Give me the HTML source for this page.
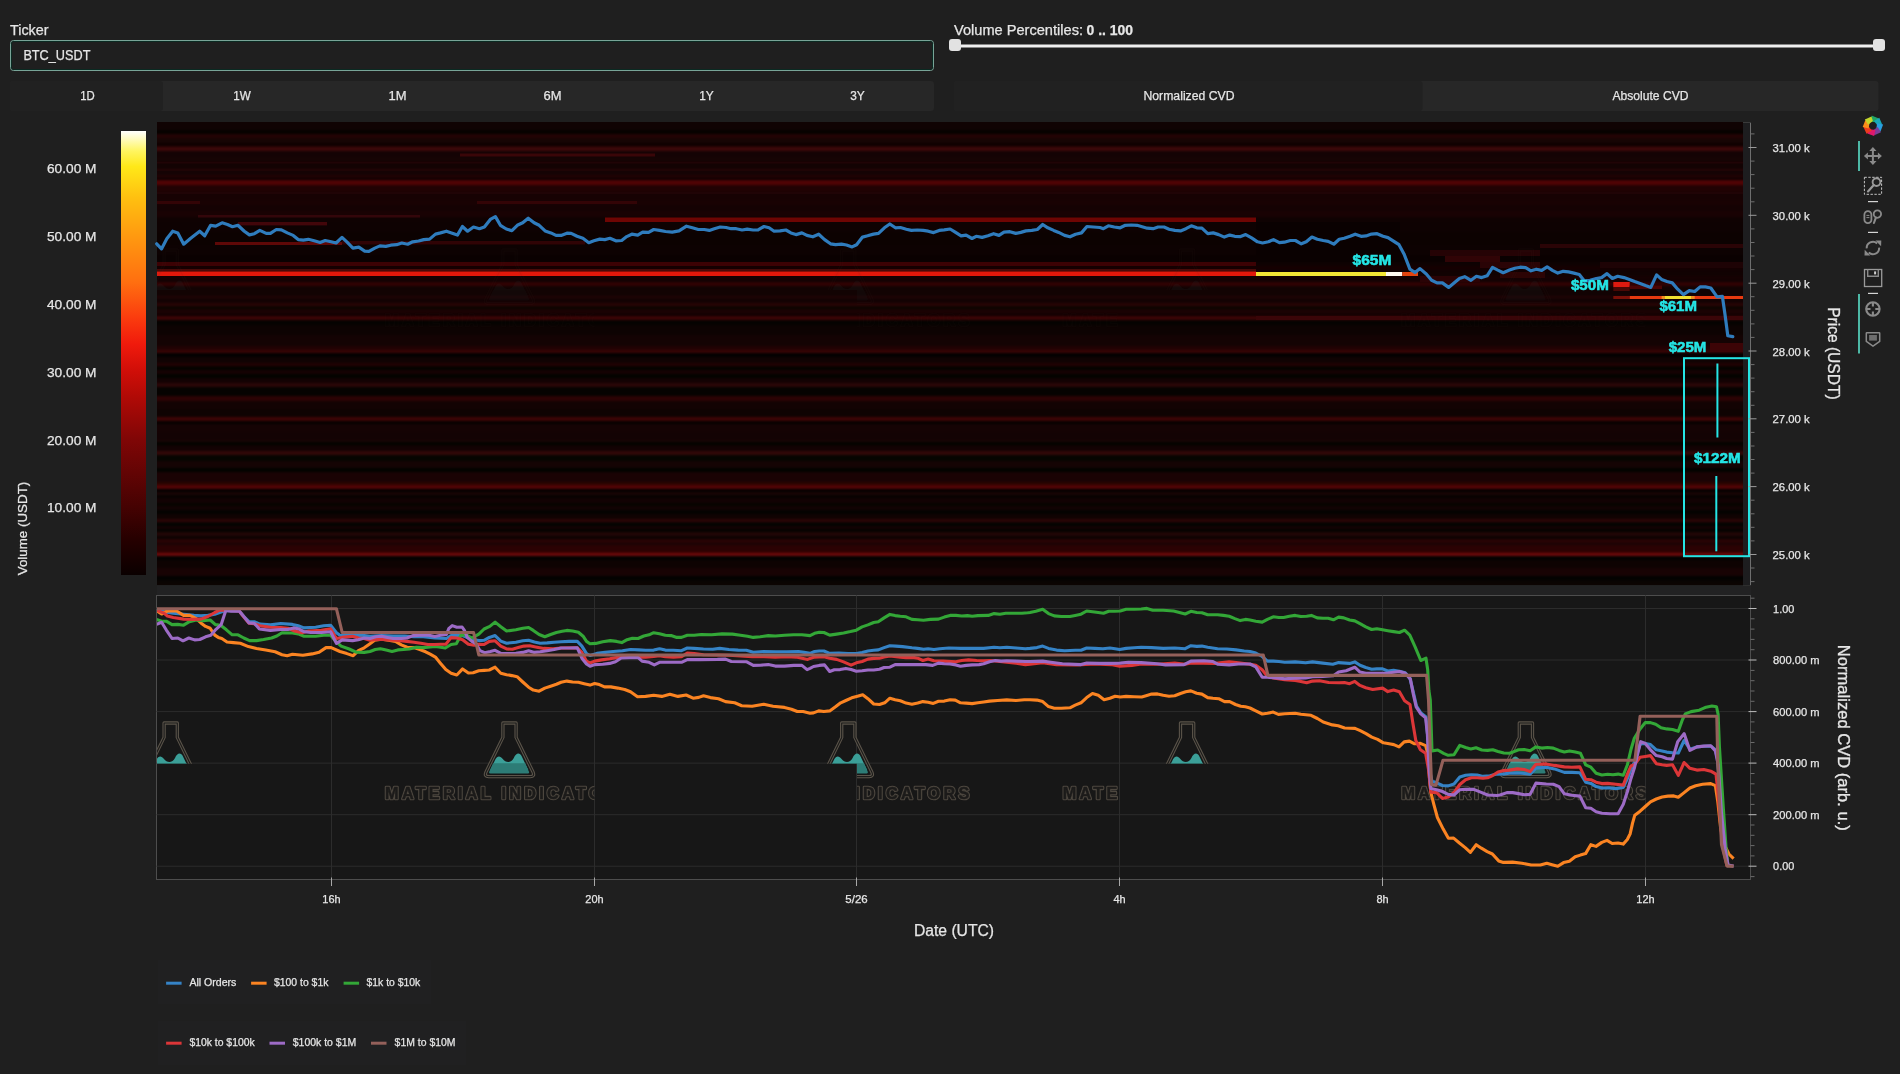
<!DOCTYPE html>
<html><head><meta charset="utf-8"><title>FireCharts</title>
<style>
html,body{margin:0;padding:0;background:#1f1f1f;width:1900px;height:1074px;overflow:hidden}
svg{display:block;font-family:"Liberation Sans",sans-serif}
text{opacity:.999}
</style></head><body>
<svg width="1900" height="1074" viewBox="0 0 1900 1074">
<rect width="1900" height="1074" fill="#1f1f1f"/>
<text x="10" y="34.6" font-size="14" text-anchor="start" font-weight="normal" fill="#e6e6e6" stroke="#e6e6e6" stroke-width="0.25" textLength="38.5" lengthAdjust="spacingAndGlyphs">Ticker</text>
<rect x="10.5" y="40.5" width="923" height="30" rx="3" fill="#1f1f1f" stroke="#78a497" stroke-width="1"/>
<rect x="11.5" y="41.5" width="921" height="28" rx="2.2" fill="none" stroke="#0b2a22" stroke-width="1"/>
<text x="23.4" y="60.2" font-size="14" text-anchor="start" font-weight="normal" fill="#e6e6e6" stroke="#e6e6e6" stroke-width="0.25" textLength="67" lengthAdjust="spacingAndGlyphs">BTC_USDT</text>
<rect x="10" y="81" width="924" height="30" rx="3" fill="#272727"/>
<rect x="10" y="81" width="153" height="30" rx="3" fill="#212121"/>
<text x="87.5" y="100" font-size="12.5" text-anchor="middle" font-weight="normal" fill="#e6e6e6" stroke="#e6e6e6" stroke-width="0.25" textLength="14.5" lengthAdjust="spacingAndGlyphs">1D</text>
<text x="242" y="100" font-size="12.5" text-anchor="middle" font-weight="normal" fill="#e6e6e6" stroke="#e6e6e6" stroke-width="0.25" textLength="17.5" lengthAdjust="spacingAndGlyphs">1W</text>
<text x="397.5" y="100" font-size="12.5" text-anchor="middle" font-weight="normal" fill="#e6e6e6" stroke="#e6e6e6" stroke-width="0.25" textLength="18" lengthAdjust="spacingAndGlyphs">1M</text>
<text x="552.5" y="100" font-size="12.5" text-anchor="middle" font-weight="normal" fill="#e6e6e6" stroke="#e6e6e6" stroke-width="0.25" textLength="18" lengthAdjust="spacingAndGlyphs">6M</text>
<text x="706.5" y="100" font-size="12.5" text-anchor="middle" font-weight="normal" fill="#e6e6e6" stroke="#e6e6e6" stroke-width="0.25" textLength="14.5" lengthAdjust="spacingAndGlyphs">1Y</text>
<text x="857.5" y="100" font-size="12.5" text-anchor="middle" font-weight="normal" fill="#e6e6e6" stroke="#e6e6e6" stroke-width="0.25" textLength="14.5" lengthAdjust="spacingAndGlyphs">3Y</text>
<text x="954" y="34.6" font-size="14" text-anchor="start" font-weight="normal" fill="#e6e6e6" stroke="#e6e6e6" stroke-width="0.25" textLength="129" lengthAdjust="spacingAndGlyphs">Volume Percentiles:</text>
<text x="1086.5" y="34.6" font-size="14" text-anchor="start" font-weight="bold" fill="#e6e6e6" stroke="#e6e6e6" stroke-width="0.25" textLength="46.5" lengthAdjust="spacingAndGlyphs">0 .. 100</text>
<rect x="955" y="44.5" width="924" height="3" fill="#efefef"/>
<rect x="949" y="39" width="12" height="12" rx="3" fill="#e2e2e2"/>
<rect x="1873" y="39" width="12" height="12" rx="3" fill="#e2e2e2"/>
<rect x="954" y="81" width="924.5" height="30" rx="3" fill="#272727"/>
<rect x="954" y="81" width="468.5" height="30" rx="3" fill="#212121"/>
<text x="1189" y="100" font-size="12.5" text-anchor="middle" font-weight="normal" fill="#e6e6e6" stroke="#e6e6e6" stroke-width="0.25" textLength="91" lengthAdjust="spacingAndGlyphs">Normalized CVD</text>
<text x="1650.5" y="100" font-size="12.5" text-anchor="middle" font-weight="normal" fill="#e6e6e6" stroke="#e6e6e6" stroke-width="0.25" textLength="76" lengthAdjust="spacingAndGlyphs">Absolute CVD</text>
<defs><linearGradient id="cb" x1="0" y1="1" x2="0" y2="0">
<stop offset="0" stop-color="#0a0000"/>
<stop offset="0.08" stop-color="#260000"/>
<stop offset="0.153" stop-color="#450202"/>
<stop offset="0.306" stop-color="#800606"/>
<stop offset="0.40" stop-color="#b00a06"/>
<stop offset="0.46" stop-color="#d00e08"/>
<stop offset="0.52" stop-color="#f01a0c"/>
<stop offset="0.58" stop-color="#fb3c0e"/>
<stop offset="0.66" stop-color="#ff6f10"/>
<stop offset="0.765" stop-color="#ff9a10"/>
<stop offset="0.85" stop-color="#ffc010"/>
<stop offset="0.92" stop-color="#ffe818"/>
<stop offset="0.955" stop-color="#fff560"/>
<stop offset="1" stop-color="#ffffff"/>
</linearGradient></defs>
<rect x="121" y="131" width="25" height="444" fill="url(#cb)"/>
<text x="96.5" y="172.9" font-size="13.3" text-anchor="end" font-weight="normal" fill="#e6e6e6" stroke="#e6e6e6" stroke-width="0.25" textLength="49.5" lengthAdjust="spacingAndGlyphs">60.00 M</text>
<text x="96.5" y="241.4" font-size="13.3" text-anchor="end" font-weight="normal" fill="#e6e6e6" stroke="#e6e6e6" stroke-width="0.25" textLength="49.5" lengthAdjust="spacingAndGlyphs">50.00 M</text>
<text x="96.5" y="309.4" font-size="13.3" text-anchor="end" font-weight="normal" fill="#e6e6e6" stroke="#e6e6e6" stroke-width="0.25" textLength="49.5" lengthAdjust="spacingAndGlyphs">40.00 M</text>
<text x="96.5" y="377.4" font-size="13.3" text-anchor="end" font-weight="normal" fill="#e6e6e6" stroke="#e6e6e6" stroke-width="0.25" textLength="49.5" lengthAdjust="spacingAndGlyphs">30.00 M</text>
<text x="96.5" y="444.9" font-size="13.3" text-anchor="end" font-weight="normal" fill="#e6e6e6" stroke="#e6e6e6" stroke-width="0.25" textLength="49.5" lengthAdjust="spacingAndGlyphs">20.00 M</text>
<text x="96.5" y="512.4" font-size="13.3" text-anchor="end" font-weight="normal" fill="#e6e6e6" stroke="#e6e6e6" stroke-width="0.25" textLength="49.5" lengthAdjust="spacingAndGlyphs">10.00 M</text>
<text transform="translate(27.2,528.5) rotate(-90)" font-size="13.3" text-anchor="middle" fill="#e6e6e6" stroke="#e6e6e6" stroke-width="0.25" textLength="93.5" lengthAdjust="spacingAndGlyphs">Volume (USDT)</text>
<rect x="157" y="122" width="1586" height="463" fill="#110303"/>
<rect x="1743" y="122" width="7.5" height="463" fill="#1d1d1f"/>
<defs><clipPath id="hclip"><rect x="157" y="122" width="1586" height="463"/></clipPath><filter id="vblur" x="0" y="0" width="100%" height="100%" filterUnits="userSpaceOnUse" primitiveUnits="userSpaceOnUse"><feGaussianBlur stdDeviation="0 0.8" color-interpolation-filters="sRGB"/></filter></defs>
<g clip-path="url(#hclip)"><g filter="url(#vblur)">
<rect x="147" y="112" width="1606" height="483" fill="#110303"/>
<rect x="147" y="122" width="1606" height="8" fill="#100303"/>
<rect x="147" y="130" width="1606" height="4" fill="#060200"/>
<rect x="147" y="134" width="1606" height="4" fill="#230304"/>
<rect x="147" y="138" width="1606" height="5" fill="#170504"/>
<rect x="147" y="143" width="1606" height="3.5" fill="#0e0000"/>
<rect x="147" y="146.5" width="1606" height="4.5" fill="#3c0809"/>
<rect x="147" y="151" width="1606" height="6" fill="#140304"/>
<rect x="147" y="157" width="1606" height="4" fill="#160404"/>
<rect x="147" y="161" width="1606" height="7" fill="#130303"/>
<rect x="147" y="168" width="1606" height="7" fill="#150304"/>
<rect x="147" y="175" width="1606" height="3" fill="#210203"/>
<rect x="147" y="178" width="1606" height="2" fill="#0b0001"/>
<rect x="147" y="180" width="1606" height="5.5" fill="#4f0304"/>
<rect x="147" y="185.5" width="1606" height="6.5" fill="#210203"/>
<rect x="147" y="192" width="1606" height="8" fill="#170203"/>
<rect x="147" y="200" width="1606" height="5" fill="#190203"/>
<rect x="147" y="205" width="1606" height="6" fill="#150203"/>
<rect x="147" y="211" width="1606" height="6.5" fill="#190203"/>
<rect x="147" y="217.5" width="1606" height="4.5" fill="#0f0202"/>
<rect x="147" y="222" width="1606" height="10" fill="#0e0202"/>
<rect x="147" y="232" width="1606" height="13" fill="#0c0201"/>
<rect x="147" y="245" width="1606" height="10" fill="#0d0202"/>
<rect x="147" y="255" width="1606" height="7" fill="#0a0101"/>
<rect x="147" y="262" width="1606" height="4" fill="#0e0202"/>
<rect x="147" y="266" width="1606" height="3" fill="#160001"/>
<rect x="147" y="269" width="1606" height="2.5" fill="#120102"/>
<rect x="147" y="271.5" width="1606" height="4.5" fill="#110202"/>
<rect x="147" y="276" width="1606" height="4" fill="#160102"/>
<rect x="147" y="280" width="1606" height="2" fill="#100203"/>
<rect x="147" y="282" width="1606" height="4" fill="#310203"/>
<rect x="147" y="286" width="1606" height="10" fill="#120303"/>
<rect x="147" y="296" width="1606" height="2" fill="#210405"/>
<rect x="147" y="298" width="1606" height="5" fill="#130203"/>
<rect x="147" y="303" width="1606" height="3.5" fill="#280405"/>
<rect x="147" y="306.5" width="1606" height="2.5" fill="#0a0500"/>
<rect x="147" y="309" width="1606" height="5" fill="#1a0203"/>
<rect x="147" y="314" width="1606" height="2" fill="#0e0001"/>
<rect x="147" y="316" width="1606" height="4" fill="#3c0405"/>
<rect x="147" y="320" width="1606" height="5" fill="#050301"/>
<rect x="147" y="325" width="1606" height="10" fill="#0d0302"/>
<rect x="147" y="335" width="1606" height="11" fill="#140303"/>
<rect x="147" y="346" width="1606" height="4" fill="#210203"/>
<rect x="147" y="350" width="1606" height="3" fill="#380405"/>
<rect x="147" y="353" width="1606" height="4" fill="#030101"/>
<rect x="147" y="357" width="1606" height="6" fill="#100303"/>
<rect x="147" y="363" width="1606" height="3.5" fill="#210203"/>
<rect x="147" y="366.5" width="1606" height="3.5" fill="#030300"/>
<rect x="147" y="370" width="1606" height="4" fill="#160203"/>
<rect x="147" y="374" width="1606" height="4" fill="#030300"/>
<rect x="147" y="378" width="1606" height="5" fill="#130203"/>
<rect x="147" y="383" width="1606" height="4" fill="#2a0607"/>
<rect x="147" y="387" width="1606" height="9" fill="#060301"/>
<rect x="147" y="396" width="1606" height="5" fill="#2c0304"/>
<rect x="147" y="401" width="1606" height="8" fill="#130303"/>
<rect x="147" y="409" width="1606" height="8" fill="#0f0302"/>
<rect x="147" y="417" width="1606" height="4" fill="#3d0405"/>
<rect x="147" y="421" width="1606" height="3" fill="#060100"/>
<rect x="147" y="424" width="1606" height="8" fill="#150304"/>
<rect x="147" y="432" width="1606" height="8" fill="#130304"/>
<rect x="147" y="440" width="1606" height="2" fill="#180404"/>
<rect x="147" y="442" width="1606" height="3.5" fill="#030300"/>
<rect x="147" y="445.5" width="1606" height="5.5" fill="#130203"/>
<rect x="147" y="451" width="1606" height="4" fill="#310808"/>
<rect x="147" y="455" width="1606" height="6" fill="#060501"/>
<rect x="147" y="461" width="1606" height="7" fill="#150404"/>
<rect x="147" y="468" width="1606" height="4" fill="#020300"/>
<rect x="147" y="472" width="1606" height="10" fill="#1a0304"/>
<rect x="147" y="482" width="1606" height="3" fill="#2b0400"/>
<rect x="147" y="485" width="1606" height="4" fill="#510405"/>
<rect x="147" y="489" width="1606" height="3" fill="#030000"/>
<rect x="147" y="492" width="1606" height="3" fill="#1a0505"/>
<rect x="147" y="495" width="1606" height="3" fill="#060201"/>
<rect x="147" y="498" width="1606" height="5" fill="#120203"/>
<rect x="147" y="503" width="1606" height="3" fill="#060400"/>
<rect x="147" y="506" width="1606" height="4" fill="#120303"/>
<rect x="147" y="510" width="1606" height="4" fill="#040301"/>
<rect x="147" y="514" width="1606" height="5" fill="#100302"/>
<rect x="147" y="519" width="1606" height="3.5" fill="#2b0506"/>
<rect x="147" y="522.5" width="1606" height="3.5" fill="#020401"/>
<rect x="147" y="526" width="1606" height="3" fill="#140203"/>
<rect x="147" y="529" width="1606" height="3" fill="#040300"/>
<rect x="147" y="532" width="1606" height="4" fill="#210606"/>
<rect x="147" y="536" width="1606" height="3" fill="#0c0302"/>
<rect x="147" y="539" width="1606" height="4" fill="#280304"/>
<rect x="147" y="543" width="1606" height="2" fill="#180404"/>
<rect x="147" y="545" width="1606" height="6.5" fill="#2b0203"/>
<rect x="147" y="551.5" width="1606" height="1.5" fill="#3c0000"/>
<rect x="147" y="553" width="1606" height="3" fill="#6c0a0b"/>
<rect x="147" y="556" width="1606" height="4" fill="#030201"/>
<rect x="147" y="560" width="1606" height="8" fill="#0e0302"/>
<rect x="147" y="568" width="1606" height="8" fill="#180304"/>
<rect x="147" y="576" width="1606" height="4" fill="#020201"/>
<rect x="147" y="580" width="1606" height="5" fill="#0a0402"/>
</g></g>
<rect x="605" y="217.5" width="651" height="4.5" fill="#6e0503"/>
<rect x="157" y="262" width="1099" height="4" fill="#3c0204"/>
<rect x="157" y="269" width="1099" height="2.5" fill="#4a0a08"/>
<rect x="157" y="271.5" width="1099" height="4.5" fill="#e2180b"/>
<rect x="1256" y="272" width="130" height="4" fill="#f5e635"/>
<rect x="1386" y="272" width="16.299999999999955" height="4" fill="#fff8f0"/>
<rect x="1402.3" y="272" width="15.700000000000045" height="4" fill="#e4440f"/>
<rect x="215" y="242" width="127" height="3" fill="#5e0807"/>
<rect x="342" y="241" width="243" height="3.5" fill="#300305"/>
<rect x="477" y="201" width="160" height="3" fill="#330406"/>
<rect x="460" y="153.5" width="195" height="3.0" fill="#3a0608"/>
<rect x="157" y="201" width="43" height="3" fill="#330406"/>
<rect x="157" y="161.6" width="1586" height="2.0" fill="#200406"/>
<rect x="157" y="168.5" width="1586" height="2.5" fill="#1f0405"/>
<rect x="157" y="192" width="1586" height="2" fill="#200406"/>
<rect x="198" y="215" width="222" height="2.5" fill="#33060a"/>
<rect x="238" y="222" width="89" height="3.4000000000000057" fill="#42060a"/>
<rect x="1613.3" y="282" width="16.40000000000009" height="5.300000000000011" fill="#dd1a10"/>
<rect x="1613.3" y="287.3" width="16.40000000000009" height="3.6999999999999886" fill="#4a0805"/>
<rect x="1629.7" y="285.5" width="32.299999999999955" height="3.5" fill="#4a0505"/>
<rect x="1613.3" y="296" width="16.40000000000009" height="3" fill="#7a1008"/>
<rect x="1629.7" y="296" width="113.29999999999995" height="3" fill="#e83a10"/>
<rect x="1665" y="296" width="26" height="3" fill="#f0e030"/>
<rect x="1661.6" y="296" width="3.400000000000091" height="3" fill="#f09020"/>
<rect x="1691" y="296" width="3.7000000000000455" height="3" fill="#f09020"/>
<rect x="1710" y="343" width="33" height="9" fill="#3c0406"/>
<rect x="1256" y="316" width="487" height="4" fill="#3a0508"/>
<rect x="1430" y="250" width="110" height="6" fill="#250305"/>
<rect x="1445" y="256" width="55" height="6" fill="#300406"/>
<rect x="1480" y="262" width="60" height="6" fill="#2a0406"/>
<rect x="1500" y="272" width="45" height="6" fill="#2c0404"/>
<rect x="1420" y="276" width="60" height="6" fill="#2a0305"/>
<rect x="1540" y="244" width="203" height="4" fill="#2a0406"/>
<rect x="1600" y="262" width="143" height="6" fill="#1e0305"/>
<rect x="1256" y="222" width="144" height="40" fill="#0a0101"/>
<polyline points="156.7,243.8 161.5,248.9 166.8,238.8 172.7,231.2 177.8,232.9 183.7,244.2 190.4,238.5 199.7,231.2 204.7,235.8 210.6,225.3 215.7,226.2 222.1,222.8 227.5,224.5 232.5,226.7 237.9,225.3 244.3,231.2 249.4,234.9 254.4,233.7 259.8,230.4 266.2,233.4 270.4,233.4 276.3,229.5 281.4,229.9 287.3,232.9 293.2,235.4 298.2,239.6 303.3,240.1 308.3,239.3 314.2,240.8 320.1,242.5 325.2,240.5 331.1,241.7 336.1,243.0 342.0,237.4 347.1,242.2 352.9,248.1 358.8,247.2 364.7,251.1 368.9,251.4 374.8,248.1 379.9,245.9 385.8,246.4 390.8,245.2 396.7,244.7 401.8,243.0 407.7,244.2 412.7,241.8 418.6,241.0 423.7,239.6 429.6,239.1 435.5,234.1 440.5,232.9 446.4,231.2 451.5,232.9 457.4,235.1 462.4,226.5 467.6,231.2 473.5,227.0 479.4,228.7 484.4,227.0 490.3,219.4 495.4,216.6 500.4,225.3 506.3,229.0 511.9,230.7 517.3,225.3 522.7,222.8 528.2,218.2 534.1,222.8 539.2,225.3 545.1,230.9 550.9,232.9 556.0,235.4 561.1,235.4 566.9,233.2 571.2,233.4 577.1,236.3 582.9,238.3 588.8,242.7 593.9,240.8 599.8,239.1 604.8,239.6 609.9,238.3 615.8,240.8 621.7,240.5 626.7,236.6 631.8,234.2 637.7,235.1 642.7,232.1 648.6,232.4 653.7,229.5 659.6,230.4 665.5,231.5 672.2,232.1 679.0,230.9 686.5,226.2 692.4,227.8 698.3,229.5 704.2,229.5 709.3,230.4 714.3,228.7 720.2,227.0 726.1,227.5 731.2,228.7 736.2,228.7 742.1,230.0 747.2,229.2 753.1,230.0 758.1,229.9 764.0,226.5 769.1,227.8 774.1,231.2 780.0,230.9 785.9,230.0 790.9,232.9 796.0,234.6 801.9,232.9 806.9,235.4 812.8,236.8 818.7,234.2 824.6,239.6 830.5,243.8 835.6,244.7 841.5,244.2 846.5,245.0 852.1,246.9 856.6,244.7 862.5,237.1 867.6,235.8 873.5,234.1 878.5,233.4 884.4,227.8 889.8,224.0 895.4,227.8 900.4,227.5 906.3,229.2 911.4,230.4 917.3,230.0 923.2,230.4 928.2,231.2 933.6,232.6 939.2,230.4 944.2,229.9 950.1,229.0 955.2,232.1 961.1,235.9 966.1,235.1 972.0,238.5 976.2,236.3 982.1,237.4 988.0,235.8 993.6,233.7 999.0,235.4 1004.0,232.1 1009.9,231.7 1015.8,233.4 1020.8,232.4 1025.9,230.9 1031.8,230.4 1037.3,229.5 1042.7,224.5 1047.8,227.8 1053.7,230.4 1058.7,232.4 1064.6,235.4 1070.0,236.8 1075.6,234.2 1081.5,232.9 1086.9,226.5 1093.3,227.0 1100.0,227.5 1103.4,228.7 1108.4,225.8 1114.3,227.0 1120.2,227.8 1125.3,225.3 1131.2,225.0 1137.1,225.3 1142.1,226.7 1147.2,228.2 1153.1,228.7 1158.1,227.0 1164.0,227.0 1169.1,229.2 1174.9,230.4 1180.5,230.9 1185.9,228.7 1191.3,225.8 1196.8,227.8 1201.9,228.2 1207.8,233.7 1213.2,232.9 1218.7,234.6 1224.3,237.1 1229.7,235.1 1234.7,236.3 1240.6,236.6 1245.7,234.6 1251.6,237.9 1257.5,241.8 1262.5,243.0 1268.4,241.8 1273.5,239.6 1279.4,242.7 1284.4,242.2 1290.3,240.5 1295.4,240.5 1301.3,243.8 1306.3,241.8 1311.9,237.1 1317.3,239.3 1323.2,240.5 1328.2,241.3 1333.8,244.2 1339.2,239.3 1344.2,238.3 1350.1,236.3 1355.2,234.2 1361.1,236.3 1366.1,235.9 1371.5,234.1 1377.1,233.7 1383.0,236.3 1388.0,237.6 1393.9,241.3 1399.0,244.7 1404.0,253.9 1409.9,269.1 1415.0,272.5 1420.0,268.6 1426.3,274.0 1431.6,280.3 1437.0,282.9 1442.4,282.9 1448.6,287.4 1454.0,282.9 1459.4,278.5 1464.7,276.7 1471.0,280.3 1476.4,276.3 1481.7,277.6 1487.1,275.8 1492.5,267.4 1497.8,270.1 1503.2,272.7 1509.5,270.1 1514.8,268.3 1520.2,267.2 1525.6,267.7 1531.0,270.8 1536.3,269.2 1541.7,270.4 1547.1,266.8 1552.4,270.4 1557.8,273.1 1563.2,271.3 1568.5,271.9 1573.9,273.1 1579.3,274.5 1584.6,281.2 1590.0,280.3 1596.3,278.5 1601.6,277.6 1607.0,273.6 1612.4,278.5 1617.7,276.3 1624.0,277.6 1629.4,279.4 1634.7,281.5 1640.1,283.5 1645.5,285.6 1650.8,287.4 1656.6,274.9 1661.6,279.4 1667.0,281.5 1672.3,282.9 1677.7,289.2 1683.4,294.6 1689.3,290.6 1694.7,291.5 1700.1,286.9 1705.4,286.9 1710.8,288.0 1717.1,296.9 1722.4,296.4 1725.1,315.2 1727.8,335.7 1732.8,336.6" fill="none" stroke="#2f7cbd" stroke-width="3.2" stroke-linejoin="round" stroke-linecap="round"/>
<rect x="1684" y="358.2" width="65" height="198" fill="none" stroke="#25e5e5" stroke-width="2"/>
<line x1="1717.4" y1="363.5" x2="1717.4" y2="437.5" stroke="#25e5e5" stroke-width="2"/>
<line x1="1716.3" y1="476" x2="1716.3" y2="551.3" stroke="#25e5e5" stroke-width="2"/>
<text x="1352.6" y="264.9" font-size="15" text-anchor="start" font-weight="bold" fill="#25e5e5" stroke="#25e5e5" stroke-width="0.6" textLength="38.8" lengthAdjust="spacingAndGlyphs">$65M</text>
<text x="1570.9" y="289.7" font-size="15" text-anchor="start" font-weight="bold" fill="#25e5e5" stroke="#25e5e5" stroke-width="0.6" textLength="38" lengthAdjust="spacingAndGlyphs">$50M</text>
<text x="1659.4" y="310.7" font-size="15" text-anchor="start" font-weight="bold" fill="#25e5e5" stroke="#25e5e5" stroke-width="0.6" textLength="37.6" lengthAdjust="spacingAndGlyphs">$61M</text>
<text x="1668.7" y="351.8" font-size="15" text-anchor="start" font-weight="bold" fill="#25e5e5" stroke="#25e5e5" stroke-width="0.6" textLength="37.6" lengthAdjust="spacingAndGlyphs">$25M</text>
<text x="1694" y="462.8" font-size="15" text-anchor="start" font-weight="bold" fill="#25e5e5" stroke="#25e5e5" stroke-width="0.6" textLength="46.6" lengthAdjust="spacingAndGlyphs">$122M</text>
<line x1="1750.5" y1="122" x2="1750.5" y2="585" stroke="#6e6e6e" stroke-width="1"/>
<line x1="1743" y1="585.5" x2="1751" y2="585.5" stroke="#3a3a3a" stroke-width="1"/>
<line x1="1743" y1="122.5" x2="1751" y2="122.5" stroke="#3a3a3a" stroke-width="1"/>
<line x1="1748.5" y1="147.5" x2="1756.5" y2="147.5" stroke="#9a9a9a" stroke-width="1"/>
<text x="1772.6" y="152.1" font-size="11" text-anchor="start" font-weight="normal" fill="#e6e6e6" stroke="#e6e6e6" stroke-width="0.25" textLength="37" lengthAdjust="spacingAndGlyphs">31.00 k</text>
<line x1="1748.5" y1="215.3" x2="1756.5" y2="215.3" stroke="#9a9a9a" stroke-width="1"/>
<text x="1772.6" y="219.92999999999998" font-size="11" text-anchor="start" font-weight="normal" fill="#e6e6e6" stroke="#e6e6e6" stroke-width="0.25" textLength="37" lengthAdjust="spacingAndGlyphs">30.00 k</text>
<line x1="1748.5" y1="283.2" x2="1756.5" y2="283.2" stroke="#9a9a9a" stroke-width="1"/>
<text x="1772.6" y="287.76" font-size="11" text-anchor="start" font-weight="normal" fill="#e6e6e6" stroke="#e6e6e6" stroke-width="0.25" textLength="37" lengthAdjust="spacingAndGlyphs">29.00 k</text>
<line x1="1748.5" y1="351.0" x2="1756.5" y2="351.0" stroke="#9a9a9a" stroke-width="1"/>
<text x="1772.6" y="355.59000000000003" font-size="11" text-anchor="start" font-weight="normal" fill="#e6e6e6" stroke="#e6e6e6" stroke-width="0.25" textLength="37" lengthAdjust="spacingAndGlyphs">28.00 k</text>
<line x1="1748.5" y1="418.8" x2="1756.5" y2="418.8" stroke="#9a9a9a" stroke-width="1"/>
<text x="1772.6" y="423.42" font-size="11" text-anchor="start" font-weight="normal" fill="#e6e6e6" stroke="#e6e6e6" stroke-width="0.25" textLength="37" lengthAdjust="spacingAndGlyphs">27.00 k</text>
<line x1="1748.5" y1="486.6" x2="1756.5" y2="486.6" stroke="#9a9a9a" stroke-width="1"/>
<text x="1772.6" y="491.25" font-size="11" text-anchor="start" font-weight="normal" fill="#e6e6e6" stroke="#e6e6e6" stroke-width="0.25" textLength="37" lengthAdjust="spacingAndGlyphs">26.00 k</text>
<line x1="1748.5" y1="554.5" x2="1756.5" y2="554.5" stroke="#9a9a9a" stroke-width="1"/>
<text x="1772.6" y="559.08" font-size="11" text-anchor="start" font-weight="normal" fill="#e6e6e6" stroke="#e6e6e6" stroke-width="0.25" textLength="37" lengthAdjust="spacingAndGlyphs">25.00 k</text>
<line x1="1750.5" y1="133.9" x2="1754.5" y2="133.9" stroke="#6e6e6e" stroke-width="1"/>
<line x1="1750.5" y1="161.1" x2="1754.5" y2="161.1" stroke="#6e6e6e" stroke-width="1"/>
<line x1="1750.5" y1="174.6" x2="1754.5" y2="174.6" stroke="#6e6e6e" stroke-width="1"/>
<line x1="1750.5" y1="188.2" x2="1754.5" y2="188.2" stroke="#6e6e6e" stroke-width="1"/>
<line x1="1750.5" y1="201.8" x2="1754.5" y2="201.8" stroke="#6e6e6e" stroke-width="1"/>
<line x1="1750.5" y1="228.9" x2="1754.5" y2="228.9" stroke="#6e6e6e" stroke-width="1"/>
<line x1="1750.5" y1="242.5" x2="1754.5" y2="242.5" stroke="#6e6e6e" stroke-width="1"/>
<line x1="1750.5" y1="256.0" x2="1754.5" y2="256.0" stroke="#6e6e6e" stroke-width="1"/>
<line x1="1750.5" y1="269.6" x2="1754.5" y2="269.6" stroke="#6e6e6e" stroke-width="1"/>
<line x1="1750.5" y1="296.7" x2="1754.5" y2="296.7" stroke="#6e6e6e" stroke-width="1"/>
<line x1="1750.5" y1="310.3" x2="1754.5" y2="310.3" stroke="#6e6e6e" stroke-width="1"/>
<line x1="1750.5" y1="323.9" x2="1754.5" y2="323.9" stroke="#6e6e6e" stroke-width="1"/>
<line x1="1750.5" y1="337.4" x2="1754.5" y2="337.4" stroke="#6e6e6e" stroke-width="1"/>
<line x1="1750.5" y1="364.6" x2="1754.5" y2="364.6" stroke="#6e6e6e" stroke-width="1"/>
<line x1="1750.5" y1="378.1" x2="1754.5" y2="378.1" stroke="#6e6e6e" stroke-width="1"/>
<line x1="1750.5" y1="391.7" x2="1754.5" y2="391.7" stroke="#6e6e6e" stroke-width="1"/>
<line x1="1750.5" y1="405.3" x2="1754.5" y2="405.3" stroke="#6e6e6e" stroke-width="1"/>
<line x1="1750.5" y1="432.4" x2="1754.5" y2="432.4" stroke="#6e6e6e" stroke-width="1"/>
<line x1="1750.5" y1="446.0" x2="1754.5" y2="446.0" stroke="#6e6e6e" stroke-width="1"/>
<line x1="1750.5" y1="459.5" x2="1754.5" y2="459.5" stroke="#6e6e6e" stroke-width="1"/>
<line x1="1750.5" y1="473.1" x2="1754.5" y2="473.1" stroke="#6e6e6e" stroke-width="1"/>
<line x1="1750.5" y1="500.2" x2="1754.5" y2="500.2" stroke="#6e6e6e" stroke-width="1"/>
<line x1="1750.5" y1="513.8" x2="1754.5" y2="513.8" stroke="#6e6e6e" stroke-width="1"/>
<line x1="1750.5" y1="527.3" x2="1754.5" y2="527.3" stroke="#6e6e6e" stroke-width="1"/>
<line x1="1750.5" y1="540.9" x2="1754.5" y2="540.9" stroke="#6e6e6e" stroke-width="1"/>
<line x1="1750.5" y1="568.0" x2="1754.5" y2="568.0" stroke="#6e6e6e" stroke-width="1"/>
<line x1="1750.5" y1="581.6" x2="1754.5" y2="581.6" stroke="#6e6e6e" stroke-width="1"/>
<text transform="translate(1827.7,353.4) rotate(90)" font-size="16" text-anchor="middle" fill="#e6e6e6" stroke="#e6e6e6" stroke-width="0.3" textLength="92.5" lengthAdjust="spacingAndGlyphs">Price (USDT)</text>
<rect x="157" y="585.5" width="1594" height="10" fill="#222223"/>
<rect x="156.5" y="595.5" width="1594.0" height="284.0" fill="#171717" stroke="#4d4d4d" stroke-width="1"/>
<line x1="156.5" y1="608.5" x2="1750.5" y2="608.5" stroke="#2c2c2c" stroke-width="1"/>
<line x1="156.5" y1="660.0" x2="1750.5" y2="660.0" stroke="#2c2c2c" stroke-width="1"/>
<line x1="156.5" y1="711.6" x2="1750.5" y2="711.6" stroke="#2c2c2c" stroke-width="1"/>
<line x1="156.5" y1="763.1" x2="1750.5" y2="763.1" stroke="#2c2c2c" stroke-width="1"/>
<line x1="156.5" y1="814.7" x2="1750.5" y2="814.7" stroke="#2c2c2c" stroke-width="1"/>
<line x1="156.5" y1="866.2" x2="1750.5" y2="866.2" stroke="#2c2c2c" stroke-width="1"/>
<line x1="331.5" y1="595.5" x2="331.5" y2="879.5" stroke="#2c2c2c" stroke-width="1"/>
<line x1="594.5" y1="595.5" x2="594.5" y2="879.5" stroke="#2c2c2c" stroke-width="1"/>
<line x1="856.5" y1="595.5" x2="856.5" y2="879.5" stroke="#2c2c2c" stroke-width="1"/>
<line x1="1119.5" y1="595.5" x2="1119.5" y2="879.5" stroke="#2c2c2c" stroke-width="1"/>
<line x1="1382.5" y1="595.5" x2="1382.5" y2="879.5" stroke="#2c2c2c" stroke-width="1"/>
<line x1="1645.5" y1="595.5" x2="1645.5" y2="879.5" stroke="#2c2c2c" stroke-width="1"/>
<defs>
<clipPath id="wm"><rect x="157" y="596" width="1593" height="167.7"/><rect x="331.5" y="763" width="263" height="116"/><rect x="857" y="763" width="263" height="116"/><rect x="1382.5" y="763" width="263" height="116"/></clipPath>
<clipPath id="wmh"><rect x="157" y="122" width="1586" height="168"/><rect x="331.5" y="289" width="263" height="296"/><rect x="857" y="289" width="263" height="296"/><rect x="1382.5" y="289" width="263" height="296"/></clipPath>
<filter id="soft" x="-5%" y="-5%" width="110%" height="110%" color-interpolation-filters="sRGB"><feGaussianBlur stdDeviation="0.45"/></filter>
<g id="flask">
<path d="M119.1,13 H132.3 V27.4 L149.2,62 Q151.3,66.6 146.5,66.6 H104.9 Q100.1,66.6 102.2,62 L119.1,27.4 Z" fill="none" stroke="#5b544a" stroke-width="3.3" stroke-linejoin="round"/>
<path d="M119.1,13 H132.3 V27.4 L149.2,62 Q151.3,66.6 146.5,66.6 H104.9 Q100.1,66.6 102.2,62 L119.1,27.4 Z" fill="none" stroke="#1a1a19" stroke-width="1.1" stroke-linejoin="round"/>
<path d="M106.5,60 L111.5,49.5 C113.5,45.5 116.5,45.5 119,49 C122,53 127.5,53 130,48 C132,43.5 135.5,41.5 138,46.5 L144.5,60 z" fill="#3b9f98"/>
<path d="M109.3,53.2 h32 l3.9,8.6 q0.6,1.6 -1.2,1.6 h-37.4 q-1.8,0 -1.2,-1.6 z" fill="#2d7c76"/>
</g>
<g id="wmt"><g filter="url(#soft)"><use href="#flask"/>
<text x="1.3" y="89.1" font-size="16.2" font-weight="bold" fill="#4d473f" stroke="#4d473f" stroke-width="2.7" stroke-linejoin="round" textLength="245.4" lengthAdjust="spacing">MATERIAL INDICATORS</text>
<text x="1.3" y="89.1" font-size="16.2" font-weight="bold" fill="#1c1b1a" stroke="#1c1b1a" stroke-width="0.5" stroke-linejoin="round" textLength="245.4" lengthAdjust="spacing">MATERIAL INDICATORS</text>
</g></g>
</defs>
<g clip-path="url(#wm)">
<use href="#wmt" x="45.0" y="710"/>
<use href="#wmt" x="383.8" y="710"/>
<use href="#wmt" x="722.6" y="710"/>
<use href="#wmt" x="1061.4" y="710"/>
<use href="#wmt" x="1400.2" y="710"/>
</g>
<g clip-path="url(#wmh)" opacity="0.05">
<use href="#wmt" x="45.0" y="237"/>
<use href="#wmt" x="383.8" y="237"/>
<use href="#wmt" x="722.6" y="237"/>
<use href="#wmt" x="1061.4" y="237"/>
<use href="#wmt" x="1400.2" y="237"/>
</g>
<defs><clipPath id="bc"><rect x="157" y="596" width="1593" height="283"/></clipPath></defs><g clip-path="url(#bc)" fill="none" stroke-width="3.1" stroke-linejoin="round" stroke-linecap="butt">
<polyline points="156.6,609.6 165.1,611.9 173.2,613.1 183.6,614.2 194.0,615.4 200.9,615.9 207.9,615.4 214.8,614.2 221.8,611.9 225.8,610.5 239.2,611.0 243.8,616.5 249.0,621.7 254.2,621.7 260.0,624.1 270.4,624.9 280.8,623.5 292.4,624.4 298.2,625.8 304.0,627.9 315.6,627.2 323.7,625.8 330.6,625.2 336.4,632.7 339.9,635.3 352.6,635.6 364.2,635.6 370.0,636.2 381.6,635.6 393.2,636.0 404.7,636.0 414.0,636.8 420.9,636.4 427.9,637.1 434.8,638.0 440.6,638.3 446.4,638.5 451.1,635.6 456.8,635.1 462.6,635.6 468.4,638.0 474.2,639.7 478.8,640.6 484.1,640.3 489.3,637.4 495.1,635.6 500.8,641.1 506.6,643.2 515.9,642.2 522.8,640.8 528.6,640.3 534.4,642.0 540.2,643.2 547.2,642.9 554.1,642.2 561.1,641.8 569.2,641.4 577.3,641.4 581.9,646.1 586.5,653.6 590.0,655.5 596.9,653.4 605.1,652.4 613.2,651.5 622.4,650.7 630.5,649.5 638.6,649.9 645.6,650.3 653.7,650.1 659.5,648.7 665.3,650.1 673.4,650.3 681.5,650.7 687.3,648.0 694.2,648.4 703.5,649.0 712.7,649.2 719.7,648.4 728.9,649.5 738.2,650.1 746.3,650.3 753.3,652.2 763.7,651.5 775.3,651.8 786.8,651.8 798.4,651.5 804.2,652.4 810.0,653.4 814.6,651.5 819.3,651.0 823.9,651.0 829.7,653.4 838.9,653.0 848.2,653.6 856.3,653.6 862.1,652.4 867.9,651.0 873.7,650.3 878.3,649.9 884.1,647.6 889.9,645.7 895.7,646.1 902.6,646.6 911.9,647.8 917.7,648.4 923.5,649.2 928.1,648.7 933.9,649.5 939.7,648.7 948.9,648.0 960.5,648.4 972.1,648.4 983.7,648.4 994.1,647.2 999.9,647.8 1006.8,647.2 1016.1,648.0 1025.4,648.7 1030.0,648.4 1036.9,647.6 1042.7,646.1 1048.5,648.4 1056.6,650.1 1064.7,650.7 1075.2,650.3 1081.0,650.3 1086.7,648.0 1094.8,648.4 1102.9,648.7 1109.9,648.0 1115.1,648.7 1119.7,649.5 1126.1,648.4 1134.2,647.8 1141.2,647.2 1151.6,647.6 1163.2,648.4 1174.7,648.0 1185.2,648.7 1190.9,645.7 1196.7,646.4 1201.9,646.1 1207.7,647.2 1217.6,648.7 1226.8,649.0 1236.1,649.9 1244.2,651.0 1250.0,651.5 1255.8,653.0 1262.2,656.5 1267.4,661.1 1273.2,661.1 1278.9,661.5 1284.7,662.3 1295.2,661.9 1305.6,662.8 1312.5,661.9 1322.9,663.1 1332.8,664.2 1338.6,662.6 1349.6,663.4 1354.8,661.9 1360.0,665.2 1365.8,667.5 1371.6,669.2 1376.8,668.9 1382.6,668.9 1387.8,671.0 1393.6,670.4 1399.4,671.2 1405.2,672.7 1409.8,677.9 1413.3,692.0 1416.5,706.0 1421.0,713.0 1426.0,717.0 1427.6,735.0 1429.5,770.0 1432.0,781.1 1436.6,782.8 1442.4,785.5 1448.2,785.9 1454.0,784.0 1459.8,777.0 1465.6,775.3 1471.4,774.7 1477.2,775.0 1483.0,776.4 1489.9,775.8 1496.9,774.1 1503.8,773.9 1509.3,773.2 1517.4,773.0 1524.3,773.5 1530.1,774.3 1535.9,768.1 1546.3,767.2 1554.4,768.9 1564.3,772.4 1571.8,772.4 1579.9,772.7 1585.7,782.2 1590.9,783.4 1596.1,786.6 1601.9,788.0 1607.7,787.8 1615.8,788.6 1623.3,787.4 1627.4,778.7 1630.9,769.5 1634.3,762.5 1640.1,744.0 1645.3,743.4 1650.5,744.6 1656.3,749.8 1662.1,750.9 1666.7,752.1 1672.5,752.7 1678.3,753.0 1684.1,740.5 1689.9,749.2 1696.9,746.9 1703.8,746.3 1710.8,746.1 1715.4,749.8 1717.7,760.2 1721.5,813.0 1725.2,848.4 1727.5,866.1" stroke="#3583c6"/>
<polyline points="156.6,610.5 161.6,614.0 167.4,611.0 176.6,611.0 183.6,615.4 189.9,615.4 196.3,618.6 200.9,622.9 205.6,626.4 210.2,628.3 214.8,635.1 218.3,637.4 221.8,638.5 227.0,642.0 233.4,642.6 240.3,643.2 248.4,646.6 256.5,648.4 265.8,650.1 275.1,651.8 282.0,654.7 287.2,655.7 292.4,654.2 302.9,655.3 312.1,653.9 319.1,652.2 326.0,647.6 331.2,647.6 339.9,651.5 346.9,653.6 353.2,655.7 358.4,650.7 364.2,647.8 370.0,643.7 374.6,640.3 381.6,639.1 388.5,640.3 395.5,641.4 401.3,644.9 407.1,647.2 414.0,647.6 419.8,649.5 425.6,651.8 430.2,654.2 435.4,657.1 440.6,663.4 445.8,669.6 451.1,673.3 456.8,675.0 462.6,668.9 468.4,673.0 473.1,672.7 478.8,670.7 484.1,670.4 489.3,670.0 495.1,667.2 500.8,673.3 506.6,674.7 511.8,675.6 517.1,676.7 522.8,682.0 528.6,687.2 533.3,690.1 539.1,691.2 544.8,688.1 550.6,686.2 556.4,684.3 561.1,682.3 566.9,681.1 572.6,682.0 578.4,682.3 584.2,683.7 590.0,685.1 594.6,683.5 599.3,684.6 604.5,686.9 610.8,686.9 617.8,688.1 624.7,689.5 630.5,691.8 637.5,696.7 645.6,696.4 653.7,695.3 661.8,696.4 669.9,694.3 678.0,696.4 686.1,695.0 693.1,698.2 698.8,697.4 703.5,695.8 710.4,697.6 718.5,698.7 725.5,701.6 734.7,702.8 741.7,705.7 752.1,706.3 763.7,704.3 773.0,706.3 784.5,707.4 791.5,709.2 797.3,711.5 803.1,711.5 810.0,713.2 813.5,712.9 818.7,710.9 823.9,711.5 829.7,710.9 835.5,706.8 840.7,702.8 845.9,700.5 851.7,697.8 857.5,696.2 862.7,694.7 867.9,698.7 873.7,704.0 879.5,704.5 884.7,702.8 889.9,698.2 895.1,699.7 900.3,700.8 906.1,703.1 911.9,704.3 917.7,703.1 922.9,701.6 928.1,702.2 933.3,703.4 938.5,701.3 944.3,701.1 950.1,699.7 955.3,700.1 960.5,702.8 966.3,703.1 972.1,703.6 977.9,702.8 983.7,702.0 989.5,701.1 997.6,700.5 1006.8,699.9 1016.1,700.5 1024.2,699.7 1030.0,699.7 1036.9,700.1 1042.7,701.6 1048.5,706.6 1054.3,708.2 1061.3,708.2 1069.9,707.8 1075.2,705.1 1081.0,702.8 1086.7,697.6 1092.5,693.5 1098.3,695.3 1104.1,699.7 1109.9,698.2 1115.1,696.2 1120.3,697.0 1126.1,696.4 1134.2,696.7 1141.7,697.0 1146.9,695.5 1151.6,694.1 1157.4,693.9 1163.2,695.3 1169.0,696.2 1174.7,695.8 1180.5,693.5 1185.7,691.8 1190.9,690.9 1196.7,693.2 1201.9,694.1 1207.7,697.6 1212.9,698.2 1218.7,698.7 1224.5,701.6 1229.7,701.6 1235.5,704.5 1240.7,706.3 1245.4,706.8 1250.0,708.0 1255.8,710.9 1262.2,714.0 1267.4,713.2 1273.2,712.1 1278.4,714.4 1284.7,713.8 1295.2,713.2 1300.9,714.2 1311.0,715.3 1317.4,718.5 1323.2,722.0 1332.4,724.9 1338.2,725.7 1344.6,728.0 1355.0,728.4 1360.2,730.7 1366.0,733.6 1371.8,737.1 1377.6,739.4 1383.4,742.8 1389.2,743.8 1393.8,744.6 1399.0,746.9 1404.2,741.9 1409.4,741.1 1414.6,743.8 1420.4,743.4 1425.6,745.7 1428.0,754.4 1429.7,781.1 1431.0,793.2 1433.9,804.7 1437.4,817.5 1443.2,829.1 1448.4,838.3 1453.6,838.1 1459.4,843.0 1465.2,847.6 1470.4,852.4 1476.2,844.7 1481.4,848.2 1487.2,851.6 1492.4,854.0 1498.7,860.9 1503.4,862.4 1512.6,862.1 1521.9,863.2 1531.2,865.0 1540.4,865.0 1546.8,863.2 1552.0,864.7 1557.8,866.3 1563.6,862.6 1569.4,861.2 1575.2,856.8 1580.4,855.1 1585.6,853.6 1590.8,844.7 1596.0,846.4 1601.8,842.4 1607.0,840.4 1612.2,843.5 1618.0,843.0 1623.2,844.1 1627.3,839.5 1630.2,833.7 1632.5,823.3 1634.8,815.2 1640.1,811.2 1645.3,806.5 1650.5,801.9 1656.3,799.0 1662.1,797.0 1667.9,796.1 1673.7,795.9 1678.3,797.3 1684.1,792.6 1689.9,788.0 1695.7,785.7 1702.6,784.3 1710.7,783.6 1715.4,785.7 1717.8,801.8 1720.6,827.9 1724.3,844.6 1728.9,854.0 1733.6,858.6" stroke="#fb8422"/>
<polyline points="156.6,619.4 161.6,621.2 166.2,621.2 172.0,624.6 177.8,624.4 183.6,625.2 189.4,621.7 196.3,620.0 203.3,620.6 210.2,620.0 215.4,624.6 220.6,625.2 226.4,629.8 232.2,634.8 238.0,634.8 243.8,638.0 249.6,640.6 256.5,640.6 263.5,639.5 271.6,638.0 276.8,636.0 282.0,632.7 292.4,633.0 298.2,633.9 304.0,636.2 315.6,636.2 323.7,635.3 330.6,635.3 335.3,640.8 341.1,646.1 349.2,649.0 356.1,652.2 364.2,652.4 370.0,651.5 375.2,649.5 380.4,648.7 386.2,650.1 392.0,651.5 397.8,649.9 403.6,649.5 409.4,649.0 416.3,647.2 423.3,647.6 430.2,646.9 435.4,646.4 440.6,647.2 445.3,648.0 451.1,644.5 456.3,643.7 460.9,635.3 466.1,634.8 471.9,638.0 478.8,634.1 484.1,629.0 489.8,626.4 495.1,622.1 500.8,626.7 506.6,631.0 515.9,629.8 522.8,628.3 528.6,627.5 533.3,630.4 539.1,634.5 544.8,636.8 550.6,634.5 556.4,632.5 562.2,631.3 566.9,630.4 572.6,631.0 578.4,632.2 583.1,636.2 586.5,641.4 590.0,643.7 595.8,643.4 602.7,641.8 610.3,640.6 616.6,641.4 621.8,642.6 627.1,639.7 632.3,638.3 638.1,638.5 643.8,636.0 649.1,634.8 653.7,632.7 659.5,633.7 665.3,635.3 671.1,635.6 676.8,637.4 681.5,637.4 687.3,635.3 694.2,635.3 701.2,634.5 711.6,634.8 722.0,633.9 732.4,634.1 740.5,635.3 747.5,636.2 753.3,637.4 760.2,636.8 768.3,635.6 775.3,636.0 784.5,635.3 793.8,634.8 801.9,634.8 810.0,635.6 814.6,633.3 819.3,632.2 823.9,632.5 829.7,635.1 836.6,634.1 843.6,633.0 850.5,631.6 856.3,630.2 862.1,626.9 867.9,624.9 873.7,622.5 878.3,621.7 884.1,617.9 889.9,614.4 895.1,615.6 900.3,616.3 906.1,616.8 911.9,619.4 917.7,619.8 923.5,620.2 930.4,619.4 938.5,619.1 944.3,617.1 950.1,615.4 955.9,615.4 961.7,616.0 967.5,615.6 972.1,616.3 977.9,615.6 988.3,615.4 994.1,613.6 999.9,614.2 1005.7,613.3 1013.8,613.3 1021.9,613.3 1027.7,612.8 1030.0,612.5 1035.8,611.3 1042.7,609.3 1048.5,613.6 1054.3,615.9 1061.3,616.5 1069.9,616.5 1075.2,615.4 1081.0,614.2 1086.7,611.0 1092.5,611.7 1098.3,612.5 1103.5,613.3 1108.7,611.3 1114.5,611.3 1120.3,611.0 1126.1,609.3 1134.2,609.3 1141.2,609.0 1146.9,608.4 1152.7,610.2 1163.2,610.2 1173.6,611.0 1179.4,612.5 1185.2,614.0 1190.9,611.3 1196.7,612.5 1201.9,612.8 1207.7,614.8 1217.6,614.8 1223.4,615.4 1229.2,616.3 1234.9,618.6 1240.2,620.6 1245.4,619.4 1250.0,620.0 1255.8,621.2 1262.2,622.1 1267.4,619.4 1273.2,616.8 1278.9,617.5 1283.6,617.5 1289.4,616.3 1295.2,615.4 1300.9,616.5 1306.7,616.3 1311.4,615.4 1317.2,617.9 1322.9,618.3 1328.2,618.3 1333.4,619.8 1338.6,617.1 1343.8,617.9 1349.6,620.0 1354.8,620.9 1360.0,623.7 1365.8,626.9 1371.6,629.5 1376.8,628.7 1382.6,629.8 1387.8,630.7 1393.6,631.6 1399.4,632.5 1404.6,630.2 1409.8,635.1 1415.0,646.6 1420.8,660.5 1426.0,658.2 1427.7,669.8 1428.9,690.6 1430.3,700.0 1432.0,750.9 1437.8,750.0 1443.6,753.3 1448.2,755.3 1454.0,754.7 1459.8,745.4 1465.6,747.5 1470.8,748.9 1476.0,747.7 1481.8,750.0 1487.6,750.4 1492.8,749.8 1498.0,751.5 1503.8,753.0 1509.6,753.3 1512.7,752.1 1518.5,749.8 1524.3,749.6 1530.1,750.7 1535.9,746.9 1541.7,748.1 1547.5,747.5 1553.3,748.1 1559.1,750.4 1564.3,751.9 1569.5,750.9 1575.3,752.1 1580.5,753.3 1585.7,764.8 1590.9,767.2 1596.1,773.2 1601.9,775.0 1607.7,774.3 1612.9,774.7 1618.1,774.1 1623.3,775.3 1627.4,764.8 1630.9,749.8 1634.3,738.2 1640.1,728.9 1645.3,722.6 1650.5,722.6 1655.7,724.3 1661.0,727.8 1666.7,728.9 1672.5,729.5 1678.3,731.3 1682.4,719.7 1685.3,713.9 1691.1,711.6 1699.2,710.2 1706.1,707.2 1711.9,706.0 1716.5,706.7 1718.1,714.2 1719.4,746.3 1723.4,809.2 1726.1,848.4 1728.0,866.1" stroke="#33a737"/>
<polyline points="156.6,610.2 163.9,613.1 167.4,616.0 173.2,617.5 183.6,619.1 194.0,619.4 200.9,619.1 207.9,616.5 214.8,612.5 219.5,610.2 225.8,610.2 239.2,611.0 243.8,617.1 249.0,623.2 254.2,623.7 260.0,625.8 270.4,627.2 280.8,627.5 287.8,628.3 294.7,631.0 301.7,632.7 308.6,631.0 321.4,630.2 330.6,628.7 336.4,638.5 342.2,637.4 352.6,636.2 358.4,638.0 364.2,638.5 370.0,640.3 375.8,639.5 381.6,639.1 388.5,639.9 395.5,640.3 404.7,641.1 414.0,642.2 420.9,643.2 427.9,644.5 434.8,644.5 440.6,644.3 445.8,644.3 451.1,637.6 456.8,638.0 462.6,639.7 468.4,644.3 474.2,645.2 478.8,644.3 484.1,644.5 489.3,641.4 495.1,640.8 500.8,646.1 506.6,648.9 512.4,649.2 518.2,647.6 524.0,646.1 529.8,645.7 535.6,646.9 543.7,648.4 552.9,648.7 561.1,648.0 577.3,647.8 581.9,652.4 586.5,661.1 590.0,663.0 594.6,661.1 601.6,659.9 609.7,658.8 616.6,657.6 624.7,657.1 638.6,657.1 645.6,657.3 653.7,656.5 659.5,655.7 665.3,656.8 673.4,657.3 681.5,656.8 687.3,653.0 694.2,653.6 703.5,654.7 717.4,655.0 728.9,655.3 740.5,655.9 752.1,656.8 763.7,656.8 775.3,657.1 786.8,656.8 796.1,657.1 803.1,658.4 807.7,659.4 810.0,658.4 814.6,657.1 823.9,656.8 829.7,658.2 836.6,659.4 843.6,661.9 851.1,665.2 856.3,662.8 862.1,661.5 867.9,659.1 873.7,658.4 879.5,658.2 884.1,657.1 889.9,655.9 900.3,657.3 906.1,657.6 914.2,657.6 917.7,658.2 922.9,660.5 928.1,659.1 933.9,660.8 943.2,661.1 955.9,661.7 961.7,660.5 968.6,659.9 976.7,660.5 983.7,660.8 990.6,660.5 999.9,661.5 1006.8,662.3 1016.1,663.1 1025.4,664.6 1030.0,664.2 1042.7,662.6 1056.6,664.6 1076.3,664.9 1094.8,664.0 1111.1,664.6 1119.7,666.3 1131.9,665.4 1141.2,664.0 1157.4,664.2 1174.7,663.1 1185.2,664.2 1190.9,663.1 1203.7,663.1 1215.3,663.4 1229.2,661.9 1238.4,662.8 1250.0,664.2 1255.8,665.2 1262.2,669.8 1267.4,676.2 1273.2,677.9 1284.7,679.6 1295.2,680.4 1300.9,681.4 1306.7,682.8 1312.5,681.1 1319.5,680.8 1328.7,682.5 1339.2,682.8 1344.4,682.5 1349.6,683.7 1354.8,681.4 1360.0,685.4 1365.8,687.7 1372.7,689.5 1382.6,688.1 1387.8,691.6 1393.6,690.1 1399.4,691.8 1404.6,700.8 1410.0,704.6 1412.9,723.2 1415.8,740.5 1420.4,749.8 1425.6,753.3 1428.5,769.5 1430.8,792.1 1436.6,792.6 1442.4,798.4 1448.2,797.0 1454.0,792.6 1459.8,784.5 1465.6,779.7 1471.4,777.8 1477.2,777.8 1483.0,778.2 1487.6,777.8 1492.2,775.8 1498.0,772.0 1503.8,770.6 1509.3,770.1 1517.4,768.9 1524.3,769.5 1530.1,771.6 1535.9,764.3 1546.3,763.9 1554.4,765.4 1564.3,766.9 1571.8,767.2 1579.9,766.9 1585.7,779.3 1590.9,779.7 1596.1,782.2 1601.9,783.6 1607.7,783.4 1615.8,784.3 1623.3,785.1 1627.4,774.1 1630.9,766.0 1634.3,764.8 1640.1,757.3 1645.3,756.5 1650.5,755.6 1656.3,763.7 1662.1,764.8 1666.7,765.4 1672.5,764.8 1678.3,775.3 1684.1,762.5 1689.9,768.3 1696.9,770.1 1703.8,769.5 1710.8,771.2 1716.0,774.1 1718.1,794.3 1720.6,824.2 1722.4,844.6 1727.0,866.1" stroke="#dc3638"/>
<polyline points="156.6,624.4 161.6,622.3 166.2,629.8 172.0,638.5 177.8,638.0 183.0,640.8 188.8,638.0 194.6,639.9 199.8,639.5 205.6,636.8 210.8,635.3 216.0,629.3 221.2,624.6 225.8,610.5 231.1,611.3 239.2,611.0 243.8,616.5 249.0,622.9 254.2,623.2 259.4,629.0 270.4,630.4 280.8,629.5 287.8,629.5 293.6,627.9 298.2,628.7 304.0,631.6 311.0,632.5 321.4,632.5 330.6,631.8 336.4,643.4 342.2,639.9 352.6,640.6 358.4,639.7 364.2,638.0 370.0,638.5 375.8,636.8 381.6,636.2 387.4,637.4 393.2,638.5 401.3,638.5 407.1,638.0 412.8,635.6 419.8,635.3 427.9,635.1 434.8,636.4 440.6,635.3 446.4,634.5 448.7,628.7 452.2,625.6 456.8,627.2 462.1,627.0 464.4,630.4 467.3,637.4 471.9,641.4 476.0,643.7 480.0,650.7 484.6,652.7 490.4,651.5 495.1,650.3 500.8,653.4 506.6,653.6 515.9,653.4 522.8,652.4 528.6,650.7 534.4,652.4 540.2,651.8 547.2,650.7 554.1,649.5 561.1,648.0 569.2,648.0 577.3,647.8 581.9,658.2 586.5,664.0 590.0,666.3 594.6,664.6 602.7,664.2 609.7,663.4 615.5,661.7 621.3,658.0 629.4,657.6 638.1,657.6 642.1,661.1 649.1,662.3 654.3,664.9 659.5,662.3 671.1,662.3 681.5,662.3 687.3,659.6 700.0,659.6 717.4,659.4 725.5,659.1 731.3,661.5 746.3,661.7 753.3,665.4 760.2,665.2 768.3,664.6 775.3,666.1 784.5,666.1 793.8,665.4 801.9,665.4 807.1,669.6 810.0,668.4 813.5,666.5 819.3,665.4 824.5,664.9 829.7,671.5 834.3,669.8 840.1,669.6 845.9,668.4 851.1,669.6 856.3,671.2 862.1,670.7 867.9,670.0 873.7,670.0 879.5,669.2 884.1,667.5 889.9,667.2 895.1,664.6 902.6,664.6 914.2,664.6 925.8,664.6 932.7,665.4 938.5,663.1 944.3,663.8 950.1,664.0 955.9,664.9 960.5,666.3 966.3,665.4 972.1,664.9 979.1,664.6 983.7,663.8 989.5,661.7 995.3,660.5 1001.1,661.1 1006.8,660.8 1016.1,661.1 1025.4,661.5 1030.0,661.5 1042.7,661.1 1050.8,662.3 1062.4,663.8 1081.0,664.6 1086.7,663.1 1099.5,663.4 1111.1,663.4 1120.3,663.1 1128.4,662.3 1141.2,662.6 1157.4,663.8 1165.5,664.9 1184.0,664.6 1190.9,661.1 1203.7,660.8 1212.9,661.5 1217.6,664.2 1229.2,664.9 1238.4,664.0 1250.0,664.0 1255.8,666.9 1262.2,677.3 1267.4,677.3 1278.9,678.1 1284.7,678.8 1295.2,678.1 1305.6,677.9 1312.5,676.7 1322.9,676.5 1333.4,675.8 1338.6,672.1 1346.1,670.7 1354.8,667.2 1360.0,672.1 1365.8,673.3 1377.4,673.3 1387.8,673.0 1399.4,671.5 1405.2,673.3 1410.4,679.1 1413.3,694.1 1416.2,706.8 1420.8,713.9 1425.6,717.9 1427.4,734.7 1429.1,769.5 1430.8,788.6 1436.6,789.7 1442.4,791.5 1448.2,794.4 1454.0,795.0 1459.8,789.7 1465.6,789.2 1473.7,789.4 1480.6,792.1 1487.6,795.0 1496.9,795.5 1500.0,795.0 1506.9,792.6 1512.7,792.6 1518.5,793.6 1524.3,794.7 1530.1,794.4 1535.9,783.1 1546.3,784.0 1553.3,784.3 1559.1,786.6 1564.3,793.8 1571.8,795.2 1579.9,796.1 1585.7,807.7 1590.9,808.3 1596.1,811.7 1601.9,813.2 1610.0,813.7 1618.1,813.7 1623.3,804.2 1627.4,791.5 1630.9,778.7 1634.3,768.3 1637.8,753.3 1640.7,741.7 1645.3,743.4 1650.5,749.8 1656.3,755.6 1662.1,756.7 1666.7,758.5 1672.5,759.1 1677.7,741.7 1684.1,733.6 1689.9,750.4 1696.9,746.9 1703.8,746.1 1710.8,745.7 1715.4,750.9 1718.1,764.5 1721.5,813.0 1725.2,848.4 1728.0,865.1 1733.6,866.1" stroke="#9d6bc6"/>
<polyline points="156.6,608.7 336.4,608.7 342.2,632.5 473.6,632.5 478.8,655.0 1263.3,655.0 1267.9,675.4 1426.6,675.4 1428.5,700.0 1431.5,784.5 1436.0,785.1 1443.0,760.2 1634.9,760.2 1640.1,716.2 1716.8,716.2 1717.8,764.5 1721.5,844.6 1727.1,866.1 1733.6,866.1" stroke="#94605a"/>
</g>
<line x1="331.5" y1="877.5" x2="331.5" y2="886" stroke="#a8a8a8" stroke-width="1"/>
<text x="331.5" y="902.5" font-size="10.8" text-anchor="middle" font-weight="normal" fill="#e6e6e6" stroke="#e6e6e6" stroke-width="0.25" textLength="18.3" lengthAdjust="spacingAndGlyphs">16h</text>
<line x1="594.5" y1="877.5" x2="594.5" y2="886" stroke="#a8a8a8" stroke-width="1"/>
<text x="594.5" y="902.5" font-size="10.8" text-anchor="middle" font-weight="normal" fill="#e6e6e6" stroke="#e6e6e6" stroke-width="0.25" textLength="18.3" lengthAdjust="spacingAndGlyphs">20h</text>
<line x1="856.5" y1="877.5" x2="856.5" y2="886" stroke="#a8a8a8" stroke-width="1"/>
<text x="856.5" y="902.5" font-size="10.8" text-anchor="middle" font-weight="normal" fill="#e6e6e6" stroke="#e6e6e6" stroke-width="0.25" textLength="22.3" lengthAdjust="spacingAndGlyphs">5/26</text>
<line x1="1119.5" y1="877.5" x2="1119.5" y2="886" stroke="#a8a8a8" stroke-width="1"/>
<text x="1119.5" y="902.5" font-size="10.8" text-anchor="middle" font-weight="normal" fill="#e6e6e6" stroke="#e6e6e6" stroke-width="0.25" textLength="12.2" lengthAdjust="spacingAndGlyphs">4h</text>
<line x1="1382.5" y1="877.5" x2="1382.5" y2="886" stroke="#a8a8a8" stroke-width="1"/>
<text x="1382.5" y="902.5" font-size="10.8" text-anchor="middle" font-weight="normal" fill="#e6e6e6" stroke="#e6e6e6" stroke-width="0.25" textLength="12.2" lengthAdjust="spacingAndGlyphs">8h</text>
<line x1="1645.5" y1="877.5" x2="1645.5" y2="886" stroke="#a8a8a8" stroke-width="1"/>
<text x="1645.5" y="902.5" font-size="10.8" text-anchor="middle" font-weight="normal" fill="#e6e6e6" stroke="#e6e6e6" stroke-width="0.25" textLength="18.3" lengthAdjust="spacingAndGlyphs">12h</text>
<text x="954" y="935.6" font-size="16" text-anchor="middle" font-weight="normal" fill="#e6e6e6" stroke="#e6e6e6" stroke-width="0.25" textLength="80.2" lengthAdjust="spacingAndGlyphs">Date (UTC)</text>
<line x1="1748.5" y1="608.5" x2="1756.5" y2="608.5" stroke="#bdbdbd" stroke-width="1"/>
<text x="1773.1" y="612.5" font-size="11" text-anchor="start" font-weight="normal" fill="#e6e6e6" stroke="#e6e6e6" stroke-width="0.25" textLength="21.2" lengthAdjust="spacingAndGlyphs">1.00</text>
<line x1="1748.5" y1="660.0" x2="1756.5" y2="660.0" stroke="#bdbdbd" stroke-width="1"/>
<text x="1773.1" y="664.05" font-size="11" text-anchor="start" font-weight="normal" fill="#e6e6e6" stroke="#e6e6e6" stroke-width="0.25" textLength="46.5" lengthAdjust="spacingAndGlyphs">800.00 m</text>
<line x1="1748.5" y1="711.6" x2="1756.5" y2="711.6" stroke="#bdbdbd" stroke-width="1"/>
<text x="1773.1" y="715.6" font-size="11" text-anchor="start" font-weight="normal" fill="#e6e6e6" stroke="#e6e6e6" stroke-width="0.25" textLength="46.5" lengthAdjust="spacingAndGlyphs">600.00 m</text>
<line x1="1748.5" y1="763.1" x2="1756.5" y2="763.1" stroke="#bdbdbd" stroke-width="1"/>
<text x="1773.1" y="767.15" font-size="11" text-anchor="start" font-weight="normal" fill="#e6e6e6" stroke="#e6e6e6" stroke-width="0.25" textLength="46.5" lengthAdjust="spacingAndGlyphs">400.00 m</text>
<line x1="1748.5" y1="814.7" x2="1756.5" y2="814.7" stroke="#bdbdbd" stroke-width="1"/>
<text x="1773.1" y="818.7" font-size="11" text-anchor="start" font-weight="normal" fill="#e6e6e6" stroke="#e6e6e6" stroke-width="0.25" textLength="46.5" lengthAdjust="spacingAndGlyphs">200.00 m</text>
<line x1="1748.5" y1="866.2" x2="1756.5" y2="866.2" stroke="#bdbdbd" stroke-width="1"/>
<text x="1773.1" y="870.25" font-size="11" text-anchor="start" font-weight="normal" fill="#e6e6e6" stroke="#e6e6e6" stroke-width="0.25" textLength="21.2" lengthAdjust="spacingAndGlyphs">0.00</text>
<line x1="1750.5" y1="598.2" x2="1754.5" y2="598.2" stroke="#6a6a6a" stroke-width="1"/>
<line x1="1750.5" y1="618.8" x2="1754.5" y2="618.8" stroke="#6a6a6a" stroke-width="1"/>
<line x1="1750.5" y1="629.1" x2="1754.5" y2="629.1" stroke="#6a6a6a" stroke-width="1"/>
<line x1="1750.5" y1="639.4" x2="1754.5" y2="639.4" stroke="#6a6a6a" stroke-width="1"/>
<line x1="1750.5" y1="649.7" x2="1754.5" y2="649.7" stroke="#6a6a6a" stroke-width="1"/>
<line x1="1750.5" y1="670.4" x2="1754.5" y2="670.4" stroke="#6a6a6a" stroke-width="1"/>
<line x1="1750.5" y1="680.7" x2="1754.5" y2="680.7" stroke="#6a6a6a" stroke-width="1"/>
<line x1="1750.5" y1="691.0" x2="1754.5" y2="691.0" stroke="#6a6a6a" stroke-width="1"/>
<line x1="1750.5" y1="701.3" x2="1754.5" y2="701.3" stroke="#6a6a6a" stroke-width="1"/>
<line x1="1750.5" y1="721.9" x2="1754.5" y2="721.9" stroke="#6a6a6a" stroke-width="1"/>
<line x1="1750.5" y1="732.2" x2="1754.5" y2="732.2" stroke="#6a6a6a" stroke-width="1"/>
<line x1="1750.5" y1="742.5" x2="1754.5" y2="742.5" stroke="#6a6a6a" stroke-width="1"/>
<line x1="1750.5" y1="752.8" x2="1754.5" y2="752.8" stroke="#6a6a6a" stroke-width="1"/>
<line x1="1750.5" y1="773.5" x2="1754.5" y2="773.5" stroke="#6a6a6a" stroke-width="1"/>
<line x1="1750.5" y1="783.8" x2="1754.5" y2="783.8" stroke="#6a6a6a" stroke-width="1"/>
<line x1="1750.5" y1="794.1" x2="1754.5" y2="794.1" stroke="#6a6a6a" stroke-width="1"/>
<line x1="1750.5" y1="804.4" x2="1754.5" y2="804.4" stroke="#6a6a6a" stroke-width="1"/>
<line x1="1750.5" y1="825.0" x2="1754.5" y2="825.0" stroke="#6a6a6a" stroke-width="1"/>
<line x1="1750.5" y1="835.3" x2="1754.5" y2="835.3" stroke="#6a6a6a" stroke-width="1"/>
<line x1="1750.5" y1="845.6" x2="1754.5" y2="845.6" stroke="#6a6a6a" stroke-width="1"/>
<line x1="1750.5" y1="855.9" x2="1754.5" y2="855.9" stroke="#6a6a6a" stroke-width="1"/>
<line x1="1750.5" y1="876.6" x2="1754.5" y2="876.6" stroke="#6a6a6a" stroke-width="1"/>
<text transform="translate(1838.2,737.8) rotate(90)" font-size="16" text-anchor="middle" fill="#e6e6e6" stroke="#e6e6e6" stroke-width="0.3" textLength="186" lengthAdjust="spacingAndGlyphs">Normalized CVD (arb. u.)</text>
<rect x="158" y="960" width="273" height="44" fill="#202021"/><rect x="158" y="1021" width="308" height="44" fill="#202021"/>
<line x1="166.1" y1="983.2" x2="181.6" y2="983.2" stroke="#3583c6" stroke-width="3"/>
<text x="189.4" y="986.1" font-size="10.4" text-anchor="start" font-weight="normal" fill="#e6e6e6" stroke="#e6e6e6" stroke-width="0.25" textLength="47" lengthAdjust="spacingAndGlyphs">All Orders</text>
<line x1="251.1" y1="983.2" x2="266.6" y2="983.2" stroke="#fb8422" stroke-width="3"/>
<text x="274" y="986.1" font-size="10.4" text-anchor="start" font-weight="normal" fill="#e6e6e6" stroke="#e6e6e6" stroke-width="0.25" textLength="54.4" lengthAdjust="spacingAndGlyphs">$100 to $1k</text>
<line x1="343.6" y1="983.2" x2="359.1" y2="983.2" stroke="#33a737" stroke-width="3"/>
<text x="366.5" y="986.1" font-size="10.4" text-anchor="start" font-weight="normal" fill="#e6e6e6" stroke="#e6e6e6" stroke-width="0.25" textLength="53.7" lengthAdjust="spacingAndGlyphs">$1k to $10k</text>
<line x1="166.1" y1="1043.2" x2="181.6" y2="1043.2" stroke="#dc3638" stroke-width="3"/>
<text x="189.4" y="1046.1000000000001" font-size="10.4" text-anchor="start" font-weight="normal" fill="#e6e6e6" stroke="#e6e6e6" stroke-width="0.25" textLength="65.3" lengthAdjust="spacingAndGlyphs">$10k to $100k</text>
<line x1="269.5" y1="1043.2" x2="285.0" y2="1043.2" stroke="#9d6bc6" stroke-width="3"/>
<text x="292.8" y="1046.1000000000001" font-size="10.4" text-anchor="start" font-weight="normal" fill="#e6e6e6" stroke="#e6e6e6" stroke-width="0.25" textLength="63.4" lengthAdjust="spacingAndGlyphs">$100k to $1M</text>
<line x1="371" y1="1043.2" x2="386.5" y2="1043.2" stroke="#94605a" stroke-width="3"/>
<text x="394.6" y="1046.1000000000001" font-size="10.4" text-anchor="start" font-weight="normal" fill="#e6e6e6" stroke="#e6e6e6" stroke-width="0.25" textLength="60.9" lengthAdjust="spacingAndGlyphs">$1M to $10M</text>
<g id="toolbar">
<rect x="1858" y="141" width="2" height="30" fill="#4db8a6"/>
<rect x="1858" y="294" width="2" height="59.5" fill="#4db8a6"/>
<g stroke="#d4d4d4" stroke-width="1.2"><line x1="1868" y1="201.6" x2="1878" y2="201.6"/><line x1="1868" y1="232.4" x2="1878" y2="232.4"/><line x1="1868" y1="293.4" x2="1878" y2="293.4"/></g>
<!-- bokeh logo: 8 blades -->
<g transform="translate(1872.9,125.8)">
<g id="bl"><path d="M-1.2,-10.2 L5.6,-7.6 L3.4,-3.4 L-2.6,-4.2 z"/></g>
</g>
<g transform="translate(1872.9,125.8)">
<path d="M-1.2,-10.2 L5.6,-7.6 L3.4,-3.4 L-2.6,-4.2 z" fill="#21a366" transform="rotate(0)"/>
<path d="M-1.2,-10.2 L5.6,-7.6 L3.4,-3.4 L-2.6,-4.2 z" fill="#18a9b8" transform="rotate(45)"/>
<path d="M-1.2,-10.2 L5.6,-7.6 L3.4,-3.4 L-2.6,-4.2 z" fill="#2a9fe0" transform="rotate(90)"/>
<path d="M-1.2,-10.2 L5.6,-7.6 L3.4,-3.4 L-2.6,-4.2 z" fill="#7d3c98" transform="rotate(135)"/>
<path d="M-1.2,-10.2 L5.6,-7.6 L3.4,-3.4 L-2.6,-4.2 z" fill="#e0186c" transform="rotate(180)"/>
<path d="M-1.2,-10.2 L5.6,-7.6 L3.4,-3.4 L-2.6,-4.2 z" fill="#ee3a1f" transform="rotate(225)"/>
<path d="M-1.2,-10.2 L5.6,-7.6 L3.4,-3.4 L-2.6,-4.2 z" fill="#fb8c1a" transform="rotate(270)"/>
<path d="M-1.2,-10.2 L5.6,-7.6 L3.4,-3.4 L-2.6,-4.2 z" fill="#c4d62b" transform="rotate(315)"/>
</g>
<g fill="none" stroke="#8a8a8a" stroke-width="2" stroke-linecap="butt" stroke-linejoin="miter">
<!-- pan -->
<g transform="translate(1872.9,156)"><path d="M-6,0 H6 M0,-6 V6" stroke-width="2"/><path d="M-9,0 L-5,-3.6 V3.6 z M9,0 L5,-3.6 V3.6 z M0,-9 L-3.6,-5 H3.6 z M0,9 L-3.6,5 H3.6 z" fill="#8a8a8a" stroke="none"/></g>
<!-- box zoom -->
<g transform="translate(1873,186)"><rect x="-8.6" y="-8.7" width="17.2" height="17" stroke="#c4c4c4" stroke-width="1" stroke-dasharray="2.4 1.5"/><circle cx="3.5" cy="-3.9" r="3.9" stroke="#9a9a9a" stroke-width="1.9"/><path d="M0.8,-0.9 L-5,5.4" stroke="#9a9a9a" stroke-width="2.2" stroke-linecap="round"/></g>
<!-- wheel zoom -->
<g transform="translate(1873,217)"><rect x="-8.6" y="-5.8" width="7" height="12" rx="3.5" stroke-width="1.8"/><path d="M-6.6,-1.6 H-3.6 M-6.6,0.6 H-3.6" stroke-width="1"/><circle cx="4.4" cy="-2.9" r="3.7" stroke-width="1.8"/><path d="M2.9,0.6 L0.9,6" stroke-width="2.1" stroke-linecap="round"/></g>
<!-- reset -->
<g transform="translate(1872.9,248)"><path d="M-6.2,0.4 A6.2,6.2 0 0 1 4.2,-4.6" stroke-width="2"/><path d="M6.2,-0.4 A6.2,6.2 0 0 1 -4.2,4.6" stroke-width="2"/><path d="M2.6,-7.4 L8.2,-1.8 L8.4,-7.6 z M-2.6,7.4 L-8.2,1.8 L-8.4,7.6 z" fill="#8a8a8a" stroke="none"/></g>
<!-- save -->
<g transform="translate(1873.1,278)"><rect x="-8.6" y="-8.5" width="17.2" height="17" stroke="#9a9a9a" stroke-width="1.3"/><path d="M-5.4,-8.5 V-1.8 H5.2 V-8.5" stroke="#8a8a8a" stroke-width="1.4"/><rect x="1" y="-6.6" width="2" height="3" fill="#d0d0d0" stroke="none"/></g>
<!-- crosshair -->
<g transform="translate(1872.9,309)"><circle r="6.7" stroke-width="2.1"/><path d="M-6.5,0 H-2.4 M2.4,0 H6.5 M0,-6.5 V-2.4 M0,2.4 V6.5" stroke-width="2.1"/></g>
<!-- hover -->
<g transform="translate(1873,339)"><path d="M-6.2,-6.2 H6.2 Q6.7,-6.2 6.7,-5.7 V2.4 L0,7.2 L-6.7,2.4 V-5.7 Q-6.7,-6.2 -6.2,-6.2 z" stroke-width="1.5" stroke-linejoin="round"/><rect x="-3.9" y="-4" width="7.8" height="5.6" fill="#6e6e6e" stroke="none"/></g>
</g>
</g>

</svg></body></html>
